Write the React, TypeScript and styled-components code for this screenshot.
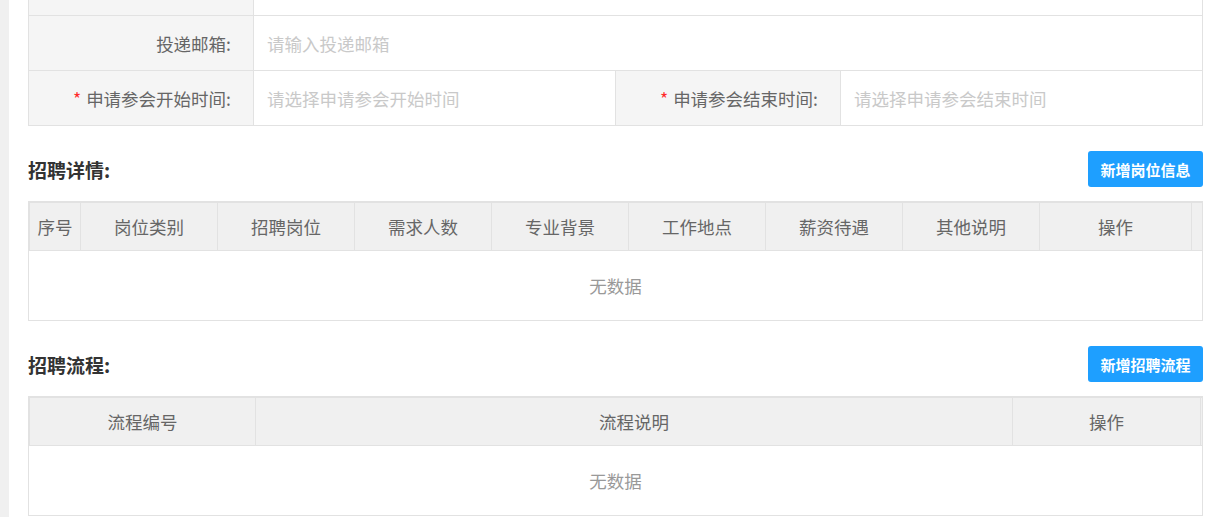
import React from 'react'
import styled, { createGlobalStyle } from 'styled-components'

const GlobalStyle = createGlobalStyle`
    * { box-sizing: border-box; }
    body {
        margin: 0;
        background: #fff;
        font-family: "Microsoft YaHei", "Noto Sans CJK SC", "Noto Sans", sans-serif;
    }
`

const Page = styled.div`
    min-height: 517px;
    overflow: hidden;
    border-left: 9px solid #f0f0f0;
    padding: 0 17px 0 19px;
`

const FormTable = styled.table`
    width: 100%;
    margin-top: -40px;
    border-collapse: collapse;
    table-layout: fixed;
    font-size: 17.5px;
`

const Label = styled.td`
    height: 55px;
    padding: 0 22px 0 0;
    border: 1px solid #e2e2e2;
    background: #f5f5f5;
    color: #666;
    text-align: right;
    white-space: nowrap;
`

const Value = styled.td`
    height: 55px;
    padding: 0 0 0 13px;
    border: 1px solid #e2e2e2;
    color: #c9c9c9;
    white-space: nowrap;
`

const Star = styled.span`
    color: #ff2a2a;
    margin-right: 5px;
`

const Section = styled.div`
    margin-top: 25px;
`

const SectionHead = styled.div`
    display: flex;
    align-items: center;
    justify-content: space-between;
    height: 36px;
`

const Title = styled.div`
    font-size: 19px;
    font-weight: bold;
    color: #333;
`

const Button = styled.button`
    height: 36px;
    width: 115px;
    border: none;
    border-radius: 3px;
    background: #1e9fff;
    color: #fff;
    font-family: inherit;
    font-size: 15px;
    font-weight: bold;
    padding: 0;
`

const TableBox = styled.div`
    margin-top: 14px;
    border: 1px solid #e2e2e2;
`

const HeadRow = styled.div<{ cols: string }>`
    display: grid;
    grid-template-columns: ${(props) => props.cols};
    border-top: 1px solid #e2e2e2;
    border-left: 1px solid #e2e2e2;
    border-bottom: 1px solid #e2e2e2;
    background: #f0f0f0;
`

const HeadCell = styled.div`
    height: 47px;
    display: flex;
    align-items: center;
    justify-content: center;
    border-right: 1px solid #e2e2e2;
    font-size: 17.5px;
    color: #666;
    white-space: nowrap;
`

const Gutter = styled.div`
    height: 47px;
`

const Empty = styled.div`
    height: 69px;
    display: flex;
    align-items: center;
    justify-content: center;
    font-size: 17.5px;
    color: #999;
`

const jobCols = ['序号', '岗位类别', '招聘岗位', '需求人数', '专业背景', '工作地点', '薪资待遇', '其他说明', '操作']
const flowCols = ['流程编号', '流程说明', '操作']

export default function App() {
    return (
        <Page>
            <GlobalStyle />
            <FormTable>
                <colgroup>
                    <col style={{ width: 225 }} />
                    <col style={{ width: 362 }} />
                    <col style={{ width: 225 }} />
                    <col />
                </colgroup>
                <tbody>
                    <tr>
                        <Label></Label>
                        <Value colSpan={3}></Value>
                    </tr>
                    <tr>
                        <Label>投递邮箱:</Label>
                        <Value colSpan={3}>请输入投递邮箱</Value>
                    </tr>
                    <tr>
                        <Label><Star>*</Star>申请参会开始时间:</Label>
                        <Value>请选择申请参会开始时间</Value>
                        <Label><Star>*</Star>申请参会结束时间:</Label>
                        <Value>请选择申请参会结束时间</Value>
                    </tr>
                </tbody>
            </FormTable>

            <Section>
                <SectionHead>
                    <Title>招聘详情:</Title>
                    <Button>新增岗位信息</Button>
                </SectionHead>
                <TableBox>
                    <HeadRow cols="51px repeat(7, 137px) 1fr 10px">
                        {jobCols.map(x => <HeadCell key={x}>{x}</HeadCell>)}
                        <Gutter />
                    </HeadRow>
                    <Empty>无数据</Empty>
                </TableBox>
            </Section>

            <Section>
                <SectionHead>
                    <Title>招聘流程:</Title>
                    <Button>新增招聘流程</Button>
                </SectionHead>
                <TableBox>
                    <HeadRow cols="226px 757px 1fr 1px">
                        {flowCols.map(x => <HeadCell key={x}>{x}</HeadCell>)}
                        <Gutter />
                    </HeadRow>
                    <Empty>无数据</Empty>
                </TableBox>
            </Section>
        </Page>
    )
}
